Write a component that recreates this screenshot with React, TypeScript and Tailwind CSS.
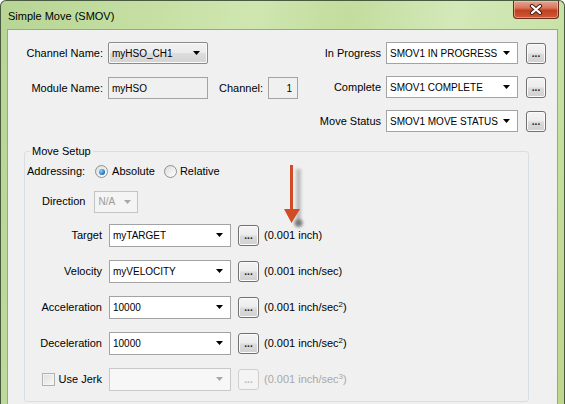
import React from "react";

function DownArrow({ disabled = false }: { disabled?: boolean }) {
  return (
    <svg width="7" height="4" viewBox="0 0 7 4" className="shrink-0">
      <path d="M0 0H7L3.5 4Z" fill={disabled ? "#a8a8a8" : "#000000"} />
    </svg>
  );
}

function Combo({ value, className, disabled = false }: { value: string; className: string; disabled?: boolean }) {
  return (
    <div
      className={`${className} flex items-center justify-between border pl-[3px] pr-[7px] text-[10px] ${
        disabled ? "border-[#c9c9c9] bg-[#f7f7f7] text-[#9a9a9a]" : "border-[#a3a3a3] bg-white text-black"
      }`}
    >
      <span className="truncate">{value}</span>
      <DownArrow disabled={disabled} />
    </div>
  );
}

function Dots({ className, disabled = false }: { className: string; disabled?: boolean }) {
  return (
    <div
      className={`${className} flex shrink-0 items-end justify-center rounded-[3px] border pb-[4px] text-[10px] font-bold leading-none ${
        disabled
          ? "border-[#cfcfcf] bg-[#f4f4f4] text-[#b8b8b8]"
          : "border-[#707070] bg-[linear-gradient(#f4f4f4_0%,#ececec_48%,#dcdcdc_52%,#d0d0d0_100%)] text-[#202020] shadow-[inset_0_0_0_1px_#fbfbfb]"
      }`}
    >
      ...
    </div>
  );
}

function Radio({ checked = false }: { checked?: boolean }) {
  return (
    <span className="flex h-[13px] w-[13px] shrink-0 items-center justify-center rounded-full border border-[#8e8f8f] bg-[linear-gradient(135deg,#dcdcdc,#ffffff)]">
      {checked && (
        <span className="h-[6px] w-[6px] rounded-full bg-[radial-gradient(circle_at_35%_35%,#8fd0ff,#1b6fb5_70%,#0f4d85)]" />
      )}
    </span>
  );
}

function SetupRow({
  label,
  value,
  unit,
  sup,
}: {
  label: React.ReactNode;
  value: string;
  unit: string;
  sup?: string;
}) {
  return (
    <div className="flex h-[23px] items-center">
      <div className="flex w-[75px] justify-end">{label}</div>
      <Combo value={value} className="ml-[7px] h-[23px] w-[122px]" />
      <Dots className="ml-[7px] h-[21px] w-[21px]" />
      <span className="ml-[5px]">
        {unit}
        {sup && <sup className="text-[8px]">{sup}</sup>})
      </span>
    </div>
  );
}

export default function App() {
  return (
    <div className="relative h-[404px] w-[565px] overflow-hidden rounded-t-[6px] border-x border-t border-[#4a5a40] bg-[linear-gradient(100deg,#b7d595_0%,#c6e0a3_25%,#cfe6b1_40%,#c2dd9d_55%,#d3e9b9_72%,#c9e3a8_88%,#bcd68a_100%)] font-['Liberation_Sans',Arial,sans-serif] text-[11px] text-black">
      {/* title bar */}
      <div className="flex h-[28px] items-start justify-between">
        <span className="ml-[7px] mt-[7px] text-[11px] text-black">Simple Move (SMOV)</span>
        <div className="mr-[5px] flex h-[18px] w-[46px] items-center justify-center rounded-b-[4px] border border-t-0 border-[#6b2a1e] bg-[linear-gradient(#e7a492_0%,#d8775e_40%,#c1401f_55%,#cf5a36_100%)] shadow-[inset_0_0_0_1px_rgba(255,210,190,0.5)]">
          <svg width="14" height="11" viewBox="0 0 14 11">
            <path d="M3 2L11 9M11 2L3 9" stroke="#4a2018" strokeWidth="4.2" strokeLinecap="round" />
            <path d="M3 2L11 9M11 2L3 9" stroke="#ffffff" strokeWidth="2.2" strokeLinecap="round" />
          </svg>
        </div>
      </div>

      {/* client area */}
      <div className="ml-[6px] h-[400px] w-[551px] border border-[#9aa68c] bg-[#f0f0f0]">
        <div className="flex pl-[15px] pr-[11px] pt-[12px]">
          {/* left column */}
          <div className="flex flex-col gap-[13px]">
            <div className="flex h-[22px] items-center">
              <span className="w-[80px] text-right">Channel Name:</span>
              <div className="ml-[5px] flex h-[22px] w-[100px] items-center justify-between rounded-[2px] border border-[#8a8a8a] bg-[linear-gradient(#f3f3f3_0%,#ebebeb_48%,#dddddd_52%,#d3d3d3_100%)] pl-[3px] pr-[7px] text-[10px] shadow-[inset_0_0_0_1px_#fafafa]">
                <span>myHSO_CH1</span>
                <DownArrow />
              </div>
            </div>
            <div className="flex h-[22px] items-center">
              <span className="w-[80px] text-right">Module Name:</span>
              <div className="ml-[5px] flex h-[22px] w-[100px] items-center border border-[#a3a3a3] bg-[#f0f0f0] pl-[3px] text-[10px]">
                myHSO
              </div>
              <span className="ml-[11px]">Channel:</span>
              <div className="ml-[5px] flex h-[22px] w-[30px] items-center justify-end border border-[#a3a3a3] bg-[#f0f0f0] pr-[5px] text-[10px]">
                1
              </div>
            </div>
          </div>

          {/* right column */}
          <div className="ml-auto flex flex-col items-end gap-[12px]">
            {[
              ["In Progress", "SMOV1 IN PROGRESS"],
              ["Complete", "SMOV1 COMPLETE"],
              ["Move Status", "SMOV1 MOVE STATUS"],
            ].map(([label, value]) => (
              <div key={label} className="flex h-[22px] items-center">
                <span>{label}</span>
                <Combo value={value} className="ml-[5px] h-[22px] w-[132px]" />
                <Dots className="ml-[8px] h-[21px] w-[20px]" />
              </div>
            ))}
          </div>
        </div>

        {/* Move Setup group */}
        <fieldset className="ml-[16px] mt-[11px] h-[259px] w-[505px] rounded-[3px] border border-[#d5dfe5] pl-[2px]">
          <legend className="ml-[3px] px-[2px]">Move Setup</legend>

          <div className="mt-[4px] flex h-[16px] items-center">
            <span>Addressing:</span>
            <span className="ml-[10px]">
              <Radio checked />
            </span>
            <span className="ml-[4px]">Absolute</span>
            <span className="ml-[9px]">
              <Radio />
            </span>
            <span className="ml-[3px]">Relative</span>
          </div>

          <div className="mt-[11px] flex h-[22px] items-center pl-[15px]">
            <span>Direction</span>
            <div className="ml-[9px] flex h-[22px] w-[44px] items-center justify-between border border-[#c4c4c4] bg-[#f4f4f4] pl-[3px] pr-[6px] text-[10px] text-[#9a9a9a]">
              <span>N/A</span>
              <DownArrow disabled />
            </div>
          </div>

          <div className="mt-[11px] flex flex-col gap-[13px]">
            <SetupRow label="Target" value="myTARGET" unit="(0.001 inch" />
            <SetupRow label="Velocity" value="myVELOCITY" unit="(0.001 inch/sec" />
            <SetupRow label="Acceleration" value="10000" unit="(0.001 inch/sec" sup="2" />
            <SetupRow label="Deceleration" value="10000" unit="(0.001 inch/sec" sup="2" />
            <div className="flex h-[23px] items-center">
              <div className="flex w-[75px] items-center justify-end gap-[4px]">
                <span className="h-[13px] w-[13px] border border-[#b1b1b1] bg-[linear-gradient(135deg,#dedede,#f8f8f8)] shadow-[inset_0_0_0_1px_#f4f4f4]" />
                <span>Use Jerk</span>
              </div>
              <Combo value="" disabled className="ml-[7px] h-[23px] w-[122px]" />
              <Dots disabled className="ml-[7px] h-[21px] w-[21px]" />
              <span className="ml-[5px] text-[#a8a8a8]">
                (0.001 inch/sec<sup className="text-[8px]">3</sup>)
              </span>
            </div>
          </div>
        </fieldset>
      </div>

      {/* annotation arrow */}
      <svg className="absolute left-[280px] top-[160px]" width="26" height="72" viewBox="0 0 26 72">
        <defs>
          <filter id="blur" x="-50%" y="-20%" width="200%" height="140%">
            <feGaussianBlur stdDeviation="1.4" />
          </filter>
        </defs>
        <g filter="url(#blur)">
          <rect x="15" y="8" width="5" height="54" fill="#bdbdbd" />
          <circle cx="17.5" cy="62" r="4" fill="#7a7a7a" />
        </g>
        <rect x="9" y="4" width="3" height="46" fill="#d24b27" />
        <path d="M3 48H19L10.5 62Z" fill="#d24b27" />
      </svg>
    </div>
  );
}
